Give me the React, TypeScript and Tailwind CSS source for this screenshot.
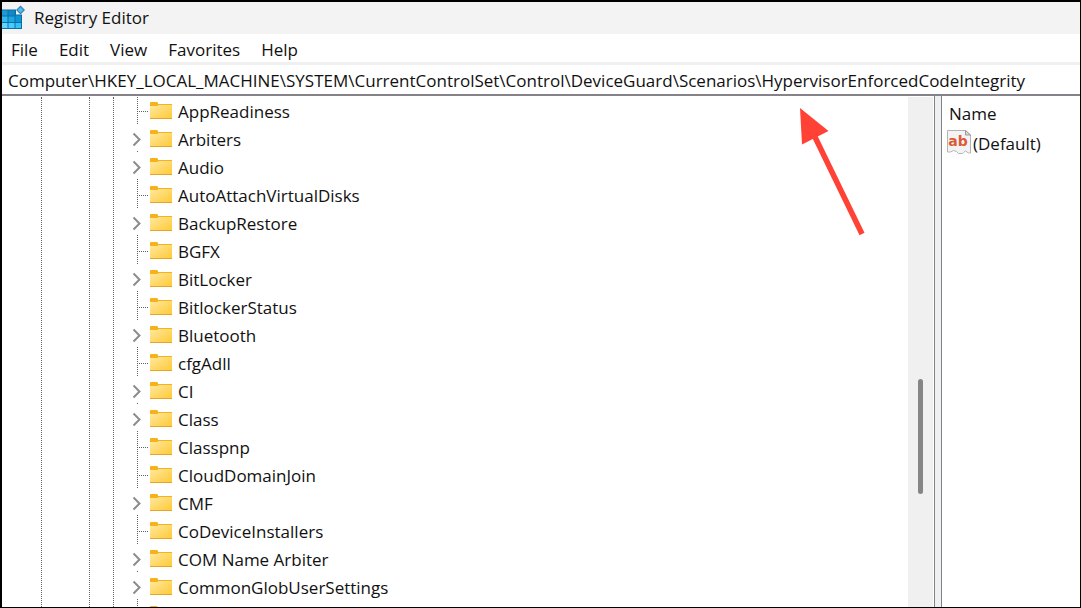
import React from 'react';

interface RegistryKey {
  name: string;
  expandable?: boolean;
}

const MENU_ITEMS = ['File', 'Edit', 'View', 'Favorites', 'Help'];

const KEYS: RegistryKey[] = [
  { name: 'AppReadiness' },
  { name: 'Arbiters', expandable: true },
  { name: 'Audio', expandable: true },
  { name: 'AutoAttachVirtualDisks' },
  { name: 'BackupRestore', expandable: true },
  { name: 'BGFX' },
  { name: 'BitLocker', expandable: true },
  { name: 'BitlockerStatus' },
  { name: 'Bluetooth', expandable: true },
  { name: 'cfgAdll' },
  { name: 'CI', expandable: true },
  { name: 'Class', expandable: true },
  { name: 'Classpnp' },
  { name: 'CloudDomainJoin' },
  { name: 'CMF', expandable: true },
  { name: 'CoDeviceInstallers' },
  { name: 'COM Name Arbiter', expandable: true },
  { name: 'CommonGlobUserSettings', expandable: true },
  { name: '' },
];

const RegistryIcon: React.FC = () => (
  <svg className="w-6 h-8 shrink-0" viewBox="0 0 24 32" aria-hidden="true">
    <path d="M0 7.500h14v5h6V27H0z" fill="#0c6ea8" />
    <rect x="0" y="8.500" width="5.500" height="5" fill="#1b9bd8" />
    <rect x="6.500" y="8.500" width="6" height="5" fill="#1189c8" />
    <rect x="0" y="14.500" width="5.500" height="5.500" fill="#35b8ee" />
    <rect x="6.500" y="14.500" width="6" height="5.500" fill="#1fa5e0" />
    <rect x="13.500" y="13.500" width="5.500" height="6.500" fill="#0f94d4" />
    <rect x="0" y="21" width="5.500" height="5" fill="#5ad6ff" />
    <rect x="6.500" y="21" width="6" height="5" fill="#4accfb" />
    <rect x="13.500" y="21" width="5.500" height="5" fill="#35c3f5" />
    <path d="M18.500 3.500l4.500 4.500-4.500 4.500-4.500-4.500z" fill="#2f87b8" />
    <path d="M18.500 5.200l2.800 2.800-2.800 2.800-2.800-2.800z" fill="#5cb8e4" />
  </svg>
);

const FolderIcon: React.FC = () => (
  <svg className="w-[22px] h-[18px] shrink-0" viewBox="0 0 22 18" aria-hidden="true">
    <defs>
      <linearGradient id="folder" x1="0" y1="0" x2="1" y2="1">
        <stop offset="0" stopColor="#ffe8a0" />
        <stop offset="1" stopColor="#ffc933" />
      </linearGradient>
    </defs>
    <path d="M0 1q0-1 1-1h6l1 1v1h14v2H0z" fill="#f5b21a" />
    <path d="M0 4h7l2-1h13v14H0z" fill="url(#folder)" />
    <path d="M0 16h22v1H0z" fill="#e5a52b" />
  </svg>
);

const StringValueIcon: React.FC = () => (
  <svg className="w-6 h-7 shrink-0" viewBox="0 0 24 28" aria-hidden="true">
    <path
      d="M.5.5h18l5 4.500v18h-2l-3-2-2 1.500-1 1h-4l-2-2-3-1-3 1.500h-3z"
      fill="#f3f3f3"
      stroke="#b4b4b4"
    />
    <path d="M18.500.5v4.500h5z" fill="#dcdcdc" stroke="#999999" />
    <text
      x="11"
      y="16"
      textAnchor="middle"
      fontFamily="'DejaVu Sans', sans-serif"
      fontSize="14"
      fontWeight="800"
      fill="#dd5a36"
    >
      ab
    </text>
  </svg>
);

const Branch: React.FC<{ item: RegistryKey }> = ({ item }) => {
  if (!item.expandable) {
    return (
      <svg className="w-[18px] h-7 shrink-0" viewBox="0 0 18 28" aria-hidden="true">
        <path d="M5.500 0v28M5 14.500h11" fill="none" stroke="#606060" strokeDasharray="1 1" />
      </svg>
    );
  }
  return (
    <button type="button" aria-label={`Expand ${item.name}`} className="w-[18px] h-7 shrink-0">
      <svg className="w-[18px] h-7" viewBox="0 0 18 28" aria-hidden="true">
        <path d="M1.500 8.500l6 6-6 6" fill="none" stroke="#8c8c8c" strokeWidth="2" />
        <path d="M5.500 26v2" stroke="#606060" strokeDasharray="1 1" />
      </svg>
    </button>
  );
};

const KeyTree: React.FC = () => (
  <nav className="flex flex-1 min-w-0 overflow-hidden pt-px" aria-label="Registry keys">
    <div className="w-10 shrink-0 border-r border-dotted border-[#606060]" />
    <div className="w-12 shrink-0 border-r border-dotted border-[#606060]" />
    <div className="w-6 shrink-0 border-r border-dotted border-[#606060]" />
    <ul className="pl-[18px]">
      {KEYS.map((item) => (
        <li key={item.name} className="flex items-center h-7 whitespace-nowrap">
          <Branch item={item} />
          <FolderIcon />
          <span className="pl-1.5 pt-0.5">{item.name}</span>
        </li>
      ))}
    </ul>
  </nav>
);

const App: React.FC = () => {
  return (
    <div className="relative flex flex-col h-screen overflow-hidden border border-l-2 border-t-2 border-black bg-white font-['Open_Sans','Noto_Sans',sans-serif] text-[17px] leading-7 text-[#111111]">
      <header className="flex items-center h-8 shrink-0 bg-[#f3f3f3]">
        <RegistryIcon />
        <h1 className="pl-2">Registry Editor</h1>
      </header>

      <div className="flex items-center h-7 shrink-0 pt-1 pl-[9px] gap-[21px]" role="menubar">
        {MENU_ITEMS.map((label) => (
          <button key={label} type="button" role="menuitem">
            {label}
          </button>
        ))}
      </div>

      <div className="shrink-0 border-t-3 border-[#f0f0f0] border-b-2 border-b-[#858289]">
        <input
          type="text"
          aria-label="Address"
          className="block w-full h-[29px] px-1.5 pt-px outline-none"
          defaultValue="Computer\HKEY_LOCAL_MACHINE\SYSTEM\CurrentControlSet\Control\DeviceGuard\Scenarios\HypervisorEnforcedCodeIntegrity"
        />
      </div>

      <main className="flex flex-1 min-h-0">
        <KeyTree />
        <div className="w-[25px] shrink-0 mt-px mr-px bg-[#f0f0f0]">
          <div className="w-[5px] h-[115px] mt-[282px] mx-auto rounded-full bg-[#858585]" />
        </div>
        <div className="w-2 shrink-0 border-x border-[#7c858e] bg-[#f0f0f0]" />
        <section className="w-[138px] shrink-0 pl-[5px] pt-1" aria-label="Values">
          <table>
            <thead>
              <tr>
                <th className="pl-0.5 text-left font-normal">Name</th>
              </tr>
            </thead>
            <tbody>
              <tr>
                <td>
                  <div className="flex items-center h-8 gap-0.5">
                    <StringValueIcon />
                    <span>(Default)</span>
                  </div>
                </td>
              </tr>
            </tbody>
          </table>
        </section>
      </main>

      <svg className="absolute left-[798px] top-[106px] w-[65px] h-[128px]" viewBox="0 0 65 128" aria-hidden="true">
        <path d="M0 0l28.500 23L2 36.500z" fill="#ff4136" />
        <path d="M14 27l48 99" stroke="#ff4136" strokeWidth="5.500" />
      </svg>
    </div>
  );
};

export default App;
